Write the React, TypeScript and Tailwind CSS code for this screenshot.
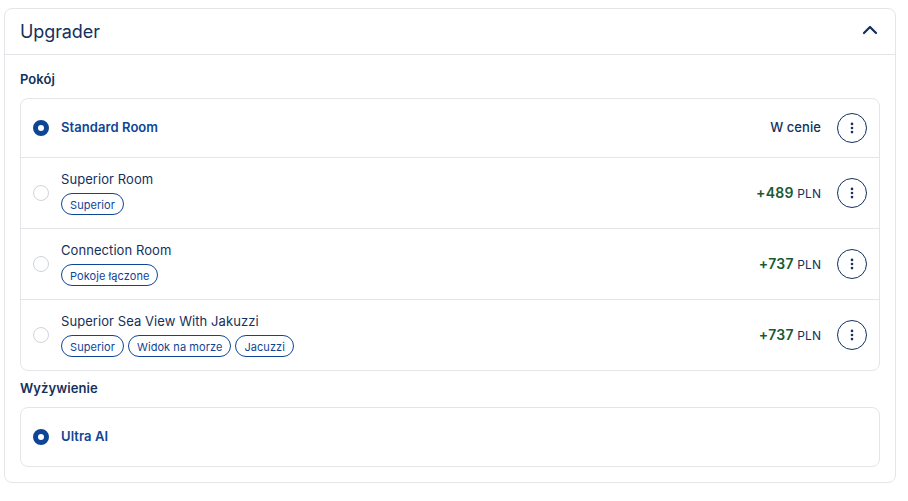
import { ChevronUp, EllipsisVertical } from 'lucide-react'

const rooms = [
  { name: 'Superior Room', price: '+489', tags: ['Superior'] },
  { name: 'Connection Room', price: '+737', tags: ['Pokoje łączone'] },
  { name: 'Superior Sea View With Jakuzzi', price: '+737', tags: ['Superior', 'Widok na morze', 'Jacuzzi'] },
]

const Radio = ({ checked }: { checked?: boolean }) =>
  checked ? (
    <span className="w-4 h-4 rounded-full border-[5px] border-[#0f4595] bg-white shrink-0" />
  ) : (
    <span className="w-4 h-4 rounded-full border border-[#ced4da] bg-white shrink-0" />
  )

const MoreButton = () => (
  <button className="w-[30px] h-[30px] rounded-full border border-[#14305c] flex items-center justify-center text-[#14305c] shrink-0">
    <EllipsisVertical size={14} strokeWidth={2.5} />
  </button>
)

const App = () => {
  return (
    <div className="h-[501px] bg-white pt-2 px-1 font-['Inter',sans-serif] text-[#14305c] tracking-[0.07px]">
      <div className="w-[892px] h-[475px] border border-[#e3e5e8] rounded-lg">
        {/* Header */}
        <div className="h-[46px] border-b border-[#e3e5e8] pl-[15px] pr-[13px] flex items-center justify-between">
          <h2 className="text-lg leading-[44px] font-normal tracking-[-0.1px]">Upgrader</h2>
          <ChevronUp size={24} strokeWidth={2.25} className="mb-[3px]" />
        </div>

        <div className="px-[15px]">
          <h3 className="text-[13px] leading-4 font-semibold mt-4 mb-[11px]">Pokój</h3>
          <div className="border border-[#e3e5e8] rounded-lg">
            <div className="h-[58px] flex items-center pl-3 pr-3">
              <Radio checked />
              <span className="ml-3 text-[13px] font-semibold text-[#0f4595]">Standard Room</span>
              <span className="ml-auto mr-4 text-[13px] font-medium">W cenie</span>
              <MoreButton />
            </div>
            {rooms.map((room) => (
              <div key={room.name} className="h-[71px] border-t border-[#e3e5e8] flex items-center pl-3 pr-3">
                <Radio />
                <div className="ml-3">
                  <div className="text-[13px] leading-4 mb-[6px]">{room.name}</div>
                  <div className="flex gap-1">
                    {room.tags.map((tag) => (
                      <span
                        key={tag}
                        className="h-[22px] px-2 border border-[#0f4595] rounded-full text-[11px] leading-[22px] text-[#0f4595]"
                      >
                        {tag}
                      </span>
                    ))}
                  </div>
                </div>
                <div className="ml-auto mr-4 text-xs">
                  <span className="text-sm font-semibold text-[#1a5a32] tracking-[0.3px]">{room.price}</span> PLN
                </div>
                <MoreButton />
              </div>
            ))}
          </div>

          <h3 className="text-[13px] leading-4 font-semibold mt-[9px] mb-[11px]">Wyżywienie</h3>
          <div className="h-[60px] border border-[#e3e5e8] rounded-lg flex items-center pl-3 pr-3">
            <Radio checked />
            <span className="ml-3 text-[13px] font-semibold text-[#0f4595]">Ultra AI</span>
          </div>
        </div>
      </div>
    </div>
  )
}

export default App
